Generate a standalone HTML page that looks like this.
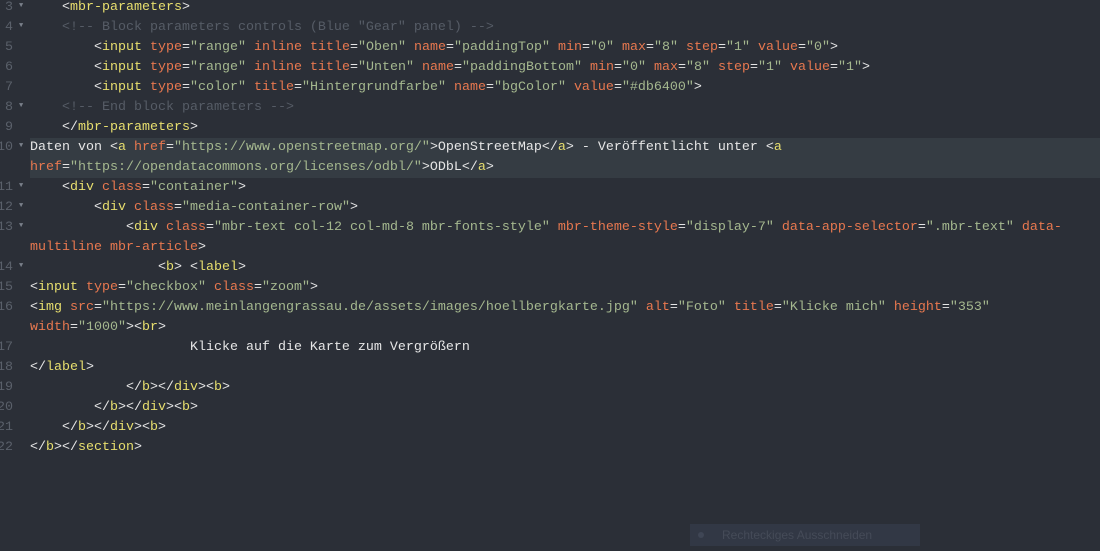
<!DOCTYPE html>
<html><head><meta charset="utf-8"><style>
body{margin:0;width:1100px;height:551px;background:#2b2f37;overflow:hidden;font-family:"Liberation Mono",monospace;font-size:13.33px;color:#e6e6e6}
.l{position:absolute;left:30px;height:20px;line-height:20px;white-space:pre}
.n{position:absolute;left:-10px;width:23px;text-align:right;height:20px;line-height:20px;color:#5a606a;font-size:13.33px}
.f{position:absolute;left:19px;color:#7a808a;font-size:7px;height:20px;line-height:16px}
.t{color:#e8df6e}.a{color:#e8784f}.s{color:#a5b88f}.c{color:#565c66}
.hl{position:absolute;left:30px;right:0;top:138px;height:40px;background:#353c43}
.pop{position:absolute;left:690px;top:524px;width:230px;height:22px;background:#323845;color:#454b58;font-family:"Liberation Sans",sans-serif;font-size:12px;line-height:22px}
</style></head><body>
<div class="hl"></div>
<div class="n" style="top:-2px">3</div><div class="f" style="top:-2px">▼</div>
<div class="n" style="top:18px">4</div><div class="f" style="top:18px">▼</div>
<div class="n" style="top:38px">5</div>
<div class="n" style="top:58px">6</div>
<div class="n" style="top:78px">7</div>
<div class="n" style="top:98px">8</div><div class="f" style="top:98px">▼</div>
<div class="n" style="top:118px">9</div>
<div class="n" style="top:138px">10</div><div class="f" style="top:138px">▼</div>
<div class="n" style="top:178px">11</div><div class="f" style="top:178px">▼</div>
<div class="n" style="top:198px">12</div><div class="f" style="top:198px">▼</div>
<div class="n" style="top:218px">13</div><div class="f" style="top:218px">▼</div>
<div class="n" style="top:258px">14</div><div class="f" style="top:258px">▼</div>
<div class="n" style="top:278px">15</div>
<div class="n" style="top:298px">16</div>
<div class="n" style="top:338px">17</div>
<div class="n" style="top:358px">18</div>
<div class="n" style="top:378px">19</div>
<div class="n" style="top:398px">20</div>
<div class="n" style="top:418px">21</div>
<div class="n" style="top:438px">22</div>

<div class="l" style="top:-2px">    &lt;<span class="t">mbr-parameters</span>&gt;</div>
<div class="l c" style="top:18px">    &lt;!-- Block parameters controls (Blue "Gear" panel) --&gt;</div>
<div class="l" style="top:38px">        &lt;<span class="t">input</span> <span class="a">type</span>=<span class="s">"range"</span> <span class="a">inline</span> <span class="a">title</span>=<span class="s">"Oben"</span> <span class="a">name</span>=<span class="s">"paddingTop"</span> <span class="a">min</span>=<span class="s">"0"</span> <span class="a">max</span>=<span class="s">"8"</span> <span class="a">step</span>=<span class="s">"1"</span> <span class="a">value</span>=<span class="s">"0"</span>&gt;</div>
<div class="l" style="top:58px">        &lt;<span class="t">input</span> <span class="a">type</span>=<span class="s">"range"</span> <span class="a">inline</span> <span class="a">title</span>=<span class="s">"Unten"</span> <span class="a">name</span>=<span class="s">"paddingBottom"</span> <span class="a">min</span>=<span class="s">"0"</span> <span class="a">max</span>=<span class="s">"8"</span> <span class="a">step</span>=<span class="s">"1"</span> <span class="a">value</span>=<span class="s">"1"</span>&gt;</div>
<div class="l" style="top:78px">        &lt;<span class="t">input</span> <span class="a">type</span>=<span class="s">"color"</span> <span class="a">title</span>=<span class="s">"Hintergrundfarbe"</span> <span class="a">name</span>=<span class="s">"bgColor"</span> <span class="a">value</span>=<span class="s">"#db6400"</span>&gt;</div>
<div class="l c" style="top:98px">    &lt;!-- End block parameters --&gt;</div>
<div class="l" style="top:118px">    &lt;/<span class="t">mbr-parameters</span>&gt;</div>
<div class="l" style="top:138px">Daten von &lt;<span class="t">a</span> <span class="a">href</span>=<span class="s">"https://www.openstreetmap.org/"</span>&gt;OpenStreetMap&lt;/<span class="t">a</span>&gt; - Veröffentlicht unter &lt;<span class="t">a</span></div>
<div class="l" style="top:158px"><span class="a">href</span>=<span class="s">"https://opendatacommons.org/licenses/odbl/"</span>&gt;ODbL&lt;/<span class="t">a</span>&gt;</div>
<div class="l" style="top:178px">    &lt;<span class="t">div</span> <span class="a">class</span>=<span class="s">"container"</span>&gt;</div>
<div class="l" style="top:198px">        &lt;<span class="t">div</span> <span class="a">class</span>=<span class="s">"media-container-row"</span>&gt;</div>
<div class="l" style="top:218px">            &lt;<span class="t">div</span> <span class="a">class</span>=<span class="s">"mbr-text col-12 col-md-8 mbr-fonts-style"</span> <span class="a">mbr-theme-style</span>=<span class="s">"display-7"</span> <span class="a">data-app-selector</span>=<span class="s">".mbr-text"</span> <span class="a">data-</span></div>
<div class="l" style="top:238px"><span class="a">multiline</span> <span class="a">mbr-article</span>&gt;</div>
<div class="l" style="top:258px">                &lt;<span class="t">b</span>&gt; &lt;<span class="t">label</span>&gt;</div>
<div class="l" style="top:278px">&lt;<span class="t">input</span> <span class="a">type</span>=<span class="s">"checkbox"</span> <span class="a">class</span>=<span class="s">"zoom"</span>&gt;</div>
<div class="l" style="top:298px">&lt;<span class="t">img</span> <span class="a">src</span>=<span class="s">"https://www.meinlangengrassau.de/assets/images/hoellbergkarte.jpg"</span> <span class="a">alt</span>=<span class="s">"Foto"</span> <span class="a">title</span>=<span class="s">"Klicke mich"</span> <span class="a">height</span>=<span class="s">"353"</span></div>
<div class="l" style="top:318px"><span class="a">width</span>=<span class="s">"1000"</span>&gt;&lt;<span class="t">br</span>&gt;</div>
<div class="l" style="top:338px">                    Klicke auf die Karte zum Vergrößern</div>
<div class="l" style="top:358px">&lt;/<span class="t">label</span>&gt;</div>
<div class="l" style="top:378px">            &lt;/<span class="t">b</span>&gt;&lt;/<span class="t">div</span>&gt;&lt;<span class="t">b</span>&gt;</div>
<div class="l" style="top:398px">        &lt;/<span class="t">b</span>&gt;&lt;/<span class="t">div</span>&gt;&lt;<span class="t">b</span>&gt;</div>
<div class="l" style="top:418px">    &lt;/<span class="t">b</span>&gt;&lt;/<span class="t">div</span>&gt;&lt;<span class="t">b</span>&gt;</div>
<div class="l" style="top:438px">&lt;/<span class="t">b</span>&gt;&lt;/<span class="t">section</span>&gt;</div>

<div class="pop"><span style="position:absolute;left:8px;top:8px;width:6px;height:6px;border-radius:3px;background:#3f4655"></span><span style="position:absolute;left:32px">Rechteckiges Ausschneiden</span></div>
</body></html>
